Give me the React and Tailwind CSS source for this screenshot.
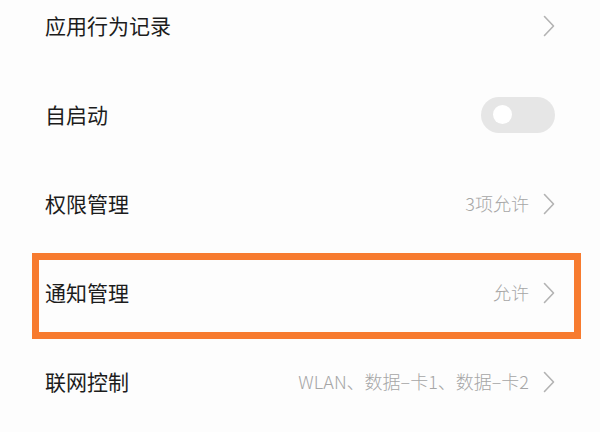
import React from 'react'

const font = { fontFamily: '"Noto Sans CJK SC", "Noto Sans", sans-serif' }

function Chevron() {
  return (
    <svg width="12" height="22" viewBox="0 0 12 22" fill="none" className="shrink-0">
      <polyline points="1.5,1.5 10.5,11 1.5,20.5" stroke="#b3b3b3" strokeWidth="1.6" strokeLinecap="round" strokeLinejoin="round" />
    </svg>
  )
}

function Toggle() {
  return (
    <div className="w-[74px] h-[36px] rounded-full bg-[#e6e6e6] flex items-center pl-[12px]">
      <div className="w-[19px] h-[19px] rounded-full bg-white" />
    </div>
  )
}

function Row({ label, value, toggle, highlight }) {
  return (
    <div className="relative h-[89px] flex items-center justify-between pl-[45px] pr-[45px]">
      <span className="text-[21px] text-[#1c1c1c]">{label}</span>
      {toggle ? (
        <Toggle />
      ) : (
        <div className="flex items-center gap-[14px]">
          {value && <span className="text-[18px] font-light text-[#a6a6a6]">{value}</span>}
          <Chevron />
        </div>
      )}
      {highlight && (
        <div className="absolute left-[32px] top-[5px] w-[549px] h-[86px] border-[7px] border-[#f77b2f] pointer-events-none" />
      )}
    </div>
  )
}

export default function App() {
  return (
    <div className="w-[600px] h-[432px] overflow-hidden bg-[#fdfdfd]" style={font}>
      <div className="-mt-[19px]">
        <Row label="应用行为记录" />
        <Row label="自启动" toggle />
        <Row label="权限管理" value="3项允许" />
        <Row label="通知管理" value="允许" highlight />
        <Row label="联网控制" value="WLAN、数据–卡1、数据–卡2" />
      </div>
    </div>
  )
}
